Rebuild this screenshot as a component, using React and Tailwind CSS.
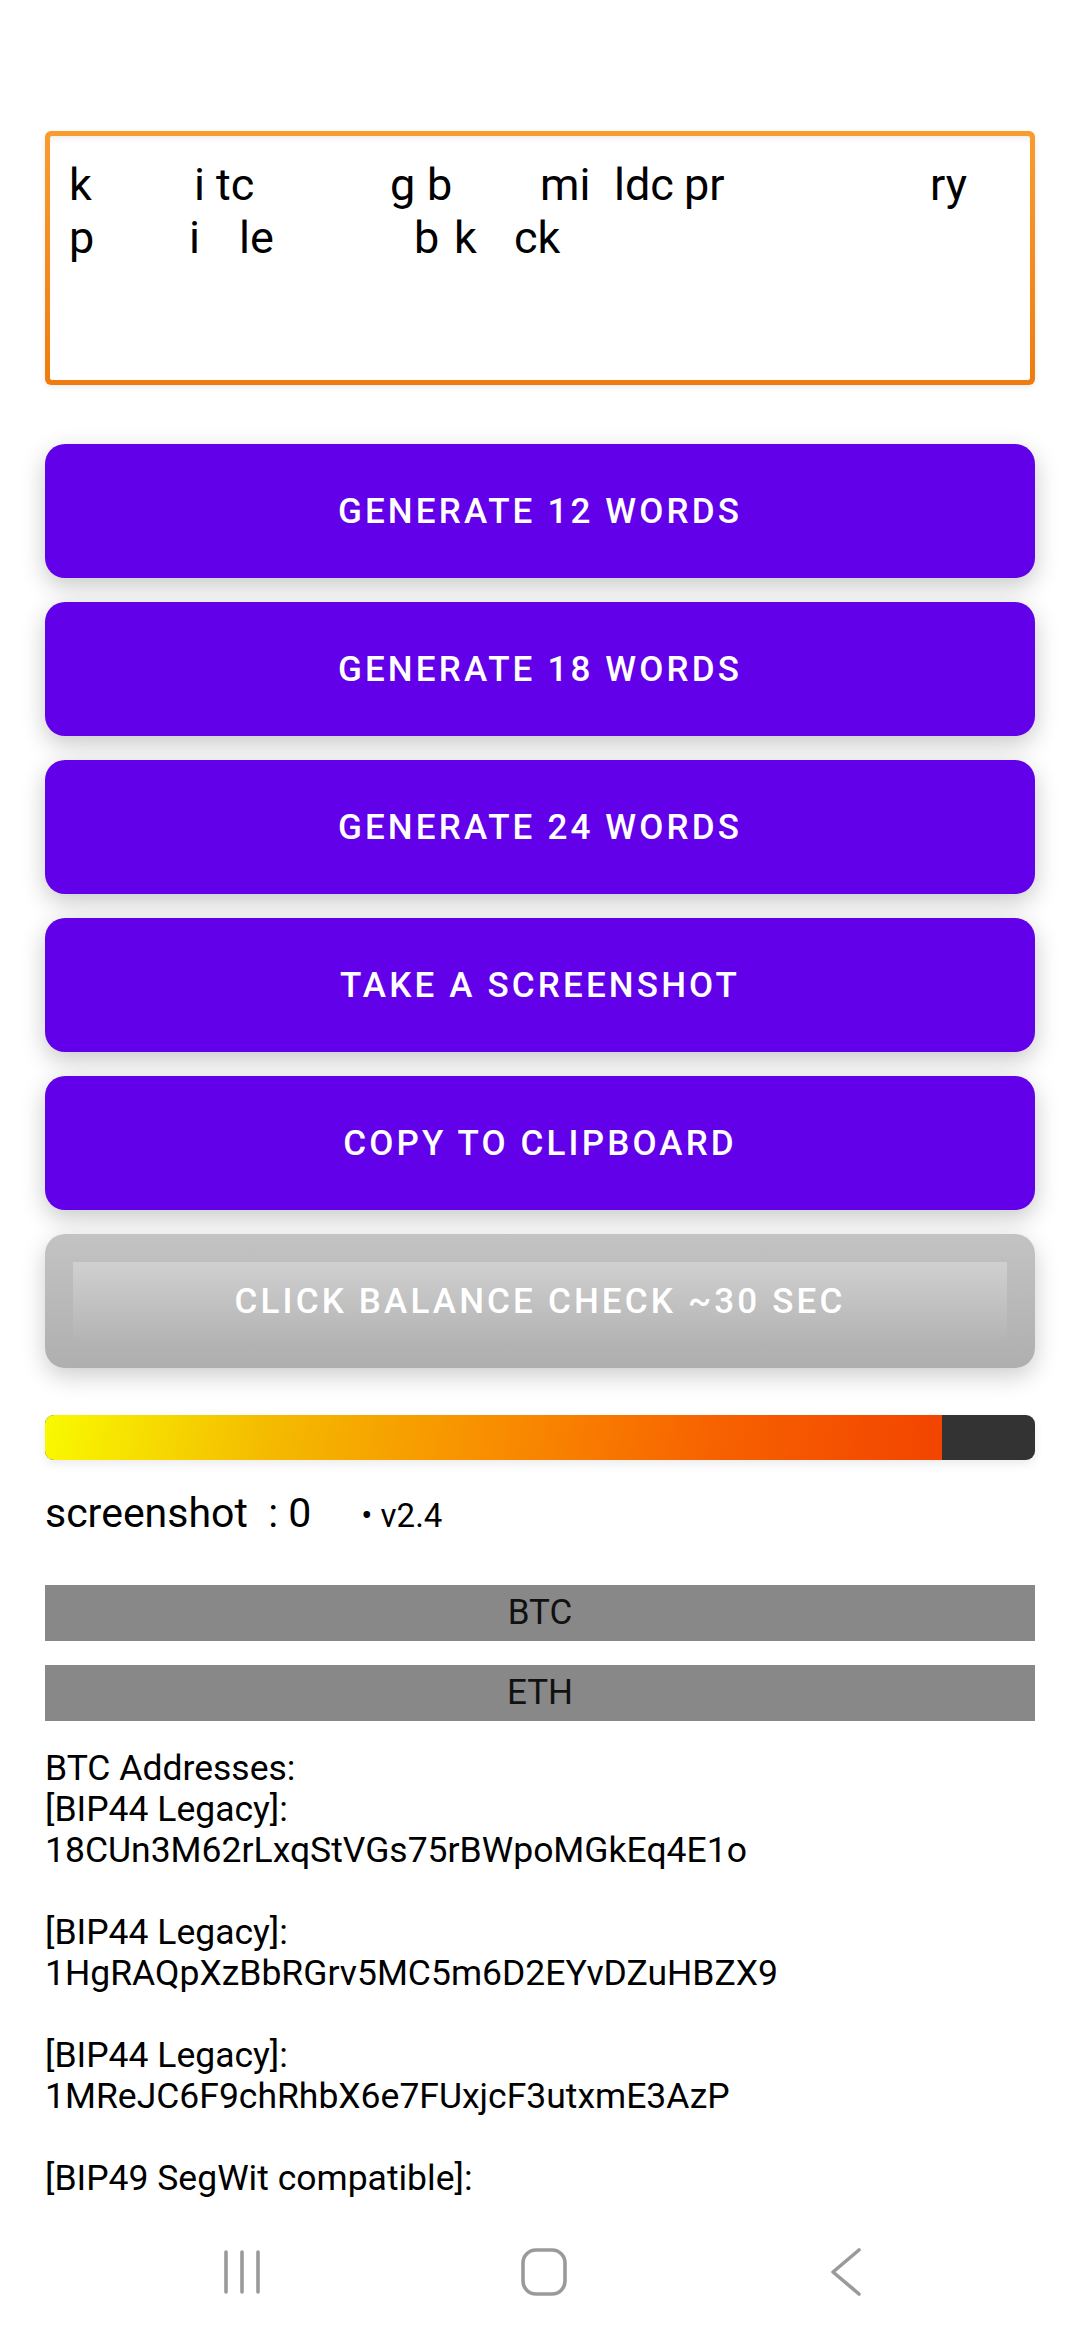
import React from 'react';

const buttons = ['GENERATE 12 WORDS', 'GENERATE 18 WORDS', 'GENERATE 24 WORDS', 'TAKE A SCREENSHOT', 'COPY TO CLIPBOARD'];

const addressText = `BTC Addresses:
[BIP44 Legacy]:
18CUn3M62rLxqStVGs75rBWpoMGkEq4E1o

[BIP44 Legacy]:
1HgRAQpXzBbRGrv5MC5m6D2EYvDZuHBZX9

[BIP44 Legacy]:
1MReJC6F9chRhbX6e7FUxjcF3utxmE3AzP

[BIP49 SegWit compatible]:`;

// visible bits of the (partly hidden) phrase, each in a box as wide as the gap to the next one
const line1 = [
  ['k', 'w-[125px]'],
  ['i tc', 'w-[196px]'],
  ['g', 'w-[37px]'],
  ['b', 'w-[113px]'],
  ['mi', 'w-[74px]'],
  ['ldc', 'w-[70px]'],
  ['pr', 'w-[246px]'],
  ['ry', ''],
];

const line2 = [
  ['p', 'w-[120px]'],
  ['i', 'w-[50px]'],
  ['le', 'w-[175px]'],
  ['b', 'w-[40px]'],
  ['k', 'w-[60px]'],
  ['ck', ''],
];

function PhraseLine({ parts }) {
  return (
    <div className="flex h-[53px] whitespace-pre">
      {parts.map(([t, w], i) => (
        <span key={i} className={`inline-block shrink-0 ${w}`}>{t}</span>
      ))}
    </div>
  );
}

function RecentsIcon() {
  return (
    <svg width="40" height="46" viewBox="0 0 40 46" fill="none" stroke="#9a9a9a" strokeWidth="3.6" strokeLinecap="round">
      <path d="M4 3v40M20 3v40M36 3v40" />
    </svg>
  );
}

function HomeIcon() {
  return (
    <svg width="46" height="48" viewBox="0 0 46 48" fill="none" stroke="#9a9a9a" strokeWidth="3.6">
      <rect x="2" y="2" width="42" height="44" rx="13" />
    </svg>
  );
}

function BackIcon() {
  return (
    <svg width="32" height="48" viewBox="0 0 32 48" fill="none" stroke="#9a9a9a" strokeWidth="3.6" strokeLinecap="round" strokeLinejoin="round">
      <path d="M29 2L3 24l26 22" />
    </svg>
  );
}

export default function App() {
  return (
    <div className="flex h-[2340px] w-[1080px] flex-col overflow-hidden bg-white font-['Roboto',sans-serif] text-black">
      <div className="h-[2208px] shrink-0 overflow-hidden px-[45px] pt-[131px]">
        {/* Mnemonic box */}
        <div className="h-[254px] rounded-[6px] bg-gradient-to-b from-[#f89c2e] to-[#ee7c0e] p-[5px] shadow-[0_2px_6px_rgba(0,0,0,0.08)]">
          <div className="h-full rounded-[2px] bg-white pl-[19px] pt-[22px] text-[45px] leading-[53px] shadow-[inset_0_6px_8px_-6px_rgba(0,0,0,0.12)]">
            <PhraseLine parts={line1} />
            <PhraseLine parts={line2} />
          </div>
        </div>

        {/* Action buttons */}
        <div className="mt-[59px] flex flex-col gap-[24px]">
          {buttons.map((label) => (
            <div
              key={label}
              className="flex h-[134px] items-center justify-center rounded-[20px] bg-[#6200ea] pt-[2px] text-[35px] font-medium tracking-[0.09em] text-white shadow-[0_8px_24px_rgba(0,0,0,0.22)]"
            >
              {label}
            </div>
          ))}
          <div className="flex h-[134px] items-center rounded-[20px] bg-gradient-to-b from-[#c3c3c3] to-[#afafaf] px-[28px] shadow-[0_8px_24px_rgba(0,0,0,0.2)]">
            <div className="flex h-[79px] w-full items-center justify-center bg-gradient-to-b from-[#d0d0d0] to-[#b4b4b4] pt-[2px] text-[35px] font-medium tracking-[0.09em] text-white">
              CLICK BALANCE CHECK ~30 SEC
            </div>
          </div>
        </div>

        {/* Progress */}
        <div className="mt-[47px] flex h-[45px] overflow-hidden rounded-[9px] bg-[#333333] shadow-[0_4px_10px_rgba(0,0,0,0.08)]">
          <div className="h-full w-[897px] bg-[linear-gradient(100deg,#f9fa00_0%,#f4bb00_25%,#f98a00_52%,#f76100_75%,#f24400_100%)]" />
        </div>

        {/* Counter */}
        <div className="mt-[29px] flex h-[48px] items-baseline text-[41px] leading-[48px]">
          <span>screenshot&nbsp;&nbsp;: 0</span>
          <span className="ml-[50px] text-[33px]">•&nbsp;v2.4</span>
        </div>

        {/* Coin tabs */}
        <div className="mt-[48px] flex h-[56px] items-center justify-center bg-[#888888] text-[35px] text-[#111]">BTC</div>
        <div className="mt-[24px] flex h-[56px] items-center justify-center bg-[#888888] text-[35px] text-[#111]">ETH</div>

        {/* Addresses */}
        <div className="mt-[27px] whitespace-pre-line text-[35.5px] leading-[41px]">{addressText}</div>
      </div>

      {/* Android nav bar */}
      <div className="flex flex-1 items-center bg-white pl-[91px] pb-[4px]">
        <div className="flex w-[302px] justify-center"><RecentsIcon /></div>
        <div className="flex w-[302px] justify-center"><HomeIcon /></div>
        <div className="flex w-[302px] justify-center"><BackIcon /></div>
      </div>
    </div>
  );
}
